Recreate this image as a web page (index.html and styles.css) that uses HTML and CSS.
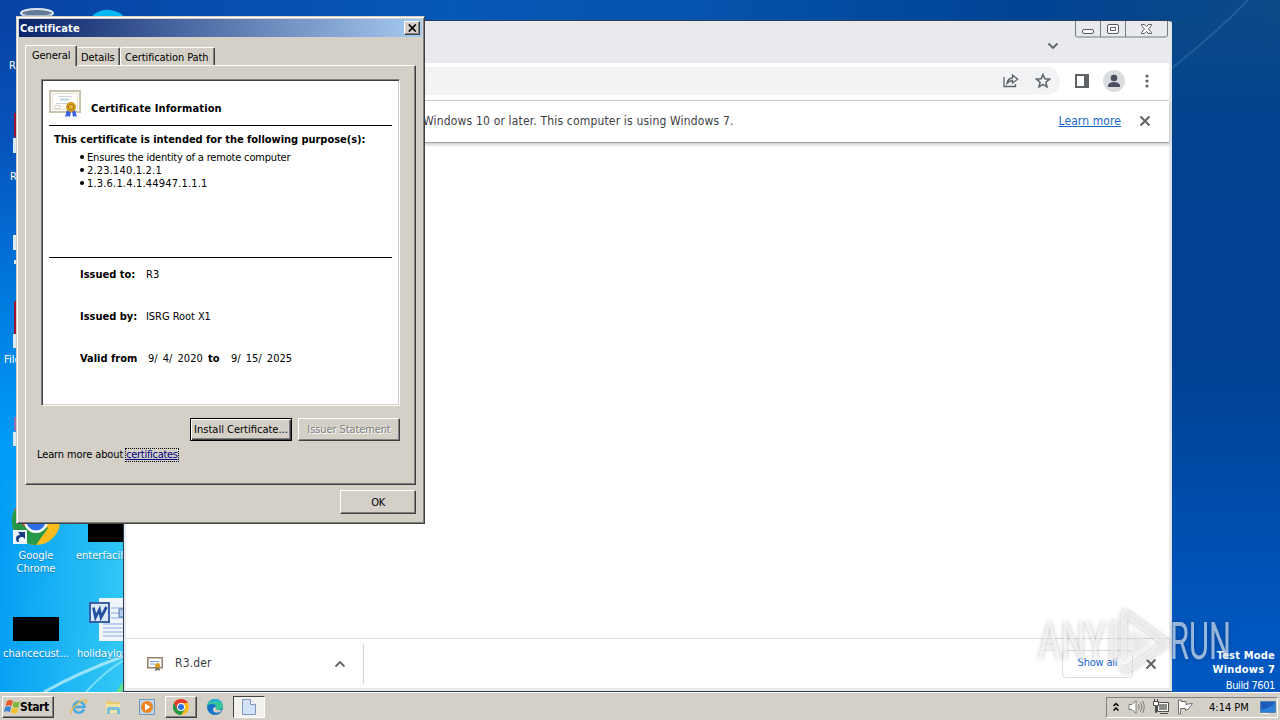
FILE: index.html
```html
<!DOCTYPE html>
<html lang="en">
<head>
    <meta charset="UTF-8">
    <meta name="viewport" content="width=device-width, initial-scale=1.0">
    <title>Certificate</title>
    <link rel="stylesheet" href="styles.css">
</head>
<body>
<div class="desktop">

    <!-- Wallpaper light rays -->
    <svg class="rays" width="1280" height="692" viewBox="0 0 1280 692">
        <path d="M44 692Q80 672 124 656" fill="none" stroke="#c8f5fd" stroke-width="3" opacity=".7"/>
        <path d="M86 692Q104 672 124 660" fill="none" stroke="#b5f3f5" stroke-width="2" opacity=".6"/>
        <path d="M116 692l8-12v12z" fill="#5ee08e"/>
        <path d="M1172 68Q1215 34 1248 0" fill="none" stroke="#4b86bd" stroke-width="2" opacity=".35"/>
    </svg>

    <!-- Desktop icons -->
    <svg class="desk-icon bin" width="36" height="14" viewBox="0 0 36 14"><ellipse cx="18" cy="5" rx="16" ry="4" fill="#637b98" stroke="#dce5ec" stroke-width="2"/><path d="M3 7l2 7h26l2-7" fill="#a9b9c9"/></svg>
    <svg class="desk-icon cloud" width="36" height="12" viewBox="0 0 36 12"><path d="M2 12V6Q10 0 19 1q10 1 15 8v3z" fill="#08b7ed"/></svg>
    <span class="desk-label l1">R</span>
    <span class="desk-label l2">R</span>
    <span class="desk-label l3">File</span>
    <svg class="desk-icon edge-strip" width="6" height="350" viewBox="0 0 6 350">
        <path d="M2 0h4v24H2zM2 188h4v33H2z" fill="#9d1230"/>
        <path d="M1 25h5v15H1zM1 122h5v15H1zM1 221h5v14H1zM1 319h5v14H1zM2 147h3v4H2z" fill="#dbe9f5"/>
        <path d="M2 304h4v14H2z" fill="#9470b0"/>
    </svg>
    <div class="desk-item chrome-item">
        <svg width="48" height="48" viewBox="0 0 48 48">
            <circle cx="24" cy="24" r="24" fill="#fbbc1b"/>
            <path d="M24 24L3 12A24 24 0 0 0 24 48l12-17z" fill="#279847"/>
            <path d="M24 0a24 24 0 0 1 21 12H24L12 30 3 12A24 24 0 0 1 24 0z" fill="#e33b2e"/>
            <circle cx="24" cy="24" r="12" fill="#fff"/><circle cx="24" cy="24" r="9.500" fill="#2e6fe4"/>
            <path d="M1 33h14v14H1z" fill="#eef3fa"/><path d="M5 45c-2-4-1-7 3-7L6 35h7v7l-2-2c-4 0-5 2-4 5z" fill="#173c86"/>
        </svg>
        <span>Google<br>Chrome</span>
    </div>
    <div class="desk-item enter-item"><i class="black-thumb"></i><span>enterfacilities...</span></div>
    <div class="desk-item chance-item"><i class="black-thumb"></i><span>chancecust...</span></div>
    <div class="desk-item holiday-item">
        <svg width="36" height="46" viewBox="0 0 36 46">
            <path d="M10 1h26v43H10z" fill="#f0f5fd"/>
            <path d="M22 11h14M22 16h14M22 21h14M14 27h22M14 31h22M14 35h22M14 39h22" stroke="#8aa9dc"/>
            <path d="M30 12h6v8h-6z" fill="#b5cbe9" stroke="#4e73ae"/>
            <path d="M1 6h19v19H1z" fill="#dce9fa" stroke="#3a60a8" stroke-width="2"/>
            <path d="M4.500 10.500l2 10 4-8 1.500 8L17.500 10" fill="none" stroke="#234f9f" stroke-width="2.700"/>
        </svg>
        <span>holidaylove...</span>
    </div>

    <div class="build"><b>Test Mode</b><b>Windows 7</b><span>Build 7601</span></div>

    <!-- Browser window -->
    <div class="browser">
        <div class="caption">
            <div class="win-buttons">
                <svg width="93" height="17" viewBox="0 0 93 17" fill="none" stroke="#777b80">
                    <path d="M.5 0v14q0 2 2 2h88q2 0 2-2V0M25.500 0v16M50.500 0v16"/>
                    <rect x="7.500" y="8.500" width="11" height="4" rx="1.500" fill="#fff" stroke="#55585c"/>
                    <rect x="32.500" y="3.500" width="11" height="9" rx="1.500" fill="#fff" stroke="#55585c"/>
                    <path d="M35.500 6.500h5v3h-5z" stroke="#55585c"/>
                    <path d="M66.500 3.500h3l2 2 2-2h3v1l-3 3.500 3 3.500v1h-3l-2-2-2 2h-3v-1l3-3.500-3-3.500z" fill="#fff" stroke="#55585c"/>
                </svg>
            </div>
            <svg class="chevron" width="12" height="8" viewBox="0 0 12 8"><path d="M1.500 1.500L6 6l4.500-4.500" fill="none" stroke="#5f6368" stroke-width="1.800"/></svg>
        </div>
        <div class="toolbar">
            <div class="omnibox">
                <svg width="16" height="16" viewBox="0 0 16 16" fill="none" stroke="#5f6368" stroke-width="1.300"><path d="M1 4v9.500h11.500V11M4 10.500Q4.500 5.500 9.500 5V2l5.200 4.200L9.500 10V7.500Q6.500 7.500 4 10.500z"/></svg>
                <svg width="16" height="16" viewBox="0 0 16 16" fill="none" stroke="#5f6368" stroke-width="1.500"><path d="M8 1.500l1.800 4.300 4.700.4-3.600 3 1.100 4.600L8 11.300l-4 2.500 1.100-4.600-3.600-3 4.700-.4z"/></svg>
            </div>
            <svg width="14" height="14" viewBox="0 0 14 14"><path d="M0 0h14v14H0zM2 2v10h7V2z" fill="#5f6368" fill-rule="evenodd"/></svg>
            <svg width="22" height="22" viewBox="0 0 22 22"><circle cx="11" cy="11" r="11" fill="#dadce0"/><circle cx="11" cy="8" r="3.300" fill="#4b5060"/><path d="M5 17v-1.500c0-2.500 4-3.500 6-3.500s6 1 6 3.500V17z" fill="#4b5060"/></svg>
            <svg width="4" height="14" viewBox="0 0 4 14" fill="#5f6368"><circle cx="2" cy="2" r="1.600"/><circle cx="2" cy="7" r="1.600"/><circle cx="2" cy="12" r="1.600"/></svg>
        </div>
        <div class="infobar">
            <span class="info-text">Windows 10 or later. This computer is using Windows 7.</span>
            <span class="learn">Learn more</span>
            <svg width="12" height="12" viewBox="0 0 12 12"><path d="M1.500 1.500l9 9M10.500 1.500l-9 9" stroke="#5f6368" stroke-width="2"/></svg>
        </div>
        <div class="page"></div>
        <div class="shelf">
            <div class="download">
                <svg width="16" height="14" viewBox="0 0 16 14"><path d="M.8.800h14.400v10H.8z" fill="#fff" stroke="#94836e" stroke-width="1.500"/><path d="M3 4.500h9M3 7h5" stroke="#7d9ada"/><path d="M9 9l-1 5 3-1 2 1-1-5" fill="#6f7067"/><circle cx="10.500" cy="8.500" r="2.500" fill="#d49c24"/></svg>
                <span>R3.der</span>
                <svg width="12" height="8" viewBox="0 0 12 8"><path d="M1.500 6.500L6 2l4.500 4.500" fill="none" stroke="#5f6368" stroke-width="1.800"/></svg>
            </div>
            <div class="show-all">Show all</div>
            <svg width="12" height="12" viewBox="0 0 12 12"><path d="M1.500 1.500l9 9M10.500 1.500l-9 9" stroke="#5f6368" stroke-width="2"/></svg>
        </div>
    </div>

    <!-- Certificate dialog -->
    <div class="dialog">
        <div class="titlebar">
            <span>Certificate</span>
            <div class="close"><svg width="9" height="8" viewBox="0 0 9 8"><path d="M.8.500l7 7M7.800.500l-7 7" stroke="#000" stroke-width="1.700"/></svg></div>
        </div>
        <div class="tabs">
            <div class="tab active"><span>General</span></div>
            <div class="tab tab-details"><span>Details</span></div>
            <div class="tab tab-path"><span>Certification Path</span></div>
        </div>
        <div class="panel">
            <div class="cert">
                <div class="cert-head">
                    <svg width="33" height="28" viewBox="0 0 33 28">
                        <path d="M1 1h30v21H1z" fill="#fffefb" stroke="#c9c0ae" stroke-width="2"/>
                        <path d="M3.500 3.500h25v16h-25z" fill="none" stroke="#e9e4d8"/>
                        <path d="M9 6.500h14M7 13.500h14" stroke="#ccd5dd"/><path d="M11 9.500h9" stroke="#b5d3ee" stroke-width="2"/>
                        <path d="M6 15.500h5v3H6z" fill="none" stroke="#d2d2cc"/>
                        <path d="M18 20l-2 7 3-1 2 1 1-6zM23 21l1 6 2-1 2 1-2-7z" fill="#3d62e0"/>
                        <circle cx="22" cy="17" r="5" fill="#d69a16"/><circle cx="22" cy="17" r="2.500" fill="#edbd3d" stroke="#a87108"/>
                    </svg>
                    <b>Certificate Information</b>
                </div>
                <div class="purpose">
                    <b>This certificate is intended for the following purpose(s):</b>
                    <ul>
                        <li><span class="p1">Ensures the identity of a remote computer</span></li>
                        <li><span class="oid">2.23.140.1.2.1</span></li>
                        <li><span class="oid">1.3.6.1.4.1.44947.1.1.1</span></li>
                    </ul>
                </div>
                <div class="issue">
                    <p><b>Issued to:</b><span>R3</span></p>
                    <p><b>Issued by:</b><span class="by">ISRG Root X1</span></p>
                    <p class="valid"><b>Valid from</b><span class="d1">9/ 4/ 2020</span><b class="and">to</b><span class="d2">9/ 15/ 2025</span></p>
                </div>
            </div>
            <div class="actions">
                <div class="btn default"><span>Install Certificate...</span></div>
                <div class="btn disabled"><span>Issuer Statement</span></div>
            </div>
            <div class="more">Learn more about <span>certificates</span></div>
        </div>
        <div class="footer"><div class="btn">OK</div></div>
    </div>

    <!-- Taskbar -->
    <div class="taskbar">
        <div class="start">
            <svg width="16" height="16" viewBox="0 0 16 16"><path d="M3 2q3-2 6 0L7.500 7Q5 5.500 1.500 7z" fill="#e8582b"/><path d="M10 2.500q3 1.500 6 0L14.500 8q-3 1.500-6-.5z" fill="#7fb73a"/><path d="M1.200 8q3-1.500 6 0L5.800 13Q3 11.500 0 13z" fill="#3b82cf"/><path d="M8.200 8.500q3 1.500 6 .5L13 14q-3 1.500-6-.5z" fill="#f5bf27"/></svg>
            <b>Start</b>
        </div>
        <div class="task">
            <svg width="18" height="16" viewBox="0 0 18 16"><path d="M14 10.500A5.500 5.500 0 1 1 14.500 8H5" fill="none" stroke="#45a9e4" stroke-width="2.500"/><path d="M2 14Q-1 14 4 8 11 0 16 1q2 1-1 4" fill="none" stroke="#e8bd42" stroke-width="1.300"/></svg>
        </div>
        <div class="task">
            <svg width="17" height="16" viewBox="0 0 17 16"><path d="M1 2h5l1 1h8v5H1z" fill="#e8cb6d"/><path d="M1 5h14v9H1z" fill="#f5e3a0"/><path d="M2 15v-5q0-2 2-2h9q2 0 2 2v5h-3v-4H5v4z" fill="#79bfdf"/></svg>
        </div>
        <div class="task">
            <svg width="16" height="16" viewBox="0 0 16 16"><path d="M.5.500h15v15H.5z" fill="#bcd8ee" stroke="#7396b7"/><circle cx="8" cy="8" r="6" fill="#ef851f"/><path d="M6 4.500L11.500 8 6 11.500z" fill="#fff"/></svg>
        </div>
        <div class="task raised">
            <svg width="16" height="16" viewBox="0 0 48 48"><circle cx="24" cy="24" r="24" fill="#fbbc1b"/><path d="M24 24L3 12A24 24 0 0 0 24 48l12-17z" fill="#279847"/><path d="M24 0a24 24 0 0 1 21 12H24L12 30 3 12A24 24 0 0 1 24 0z" fill="#e33b2e"/><circle cx="24" cy="24" r="12" fill="#fff"/><circle cx="24" cy="24" r="9" fill="#2e6fe4"/></svg>
        </div>
        <div class="task">
            <svg width="16" height="16" viewBox="0 0 16 16"><circle cx="8" cy="8" r="8" fill="#1675c6"/><path d="M0 8Q1 0 8 0q8 1 8 7 0 4-5 4-3 0-2-3-1-4-5-3-3 0-4 3z" fill="#3ac49b"/><path d="M1 5q2-5 7-5 5 0 7 4-4-3-8-1-4-1-6 2z" fill="#29b0d8"/><path d="M9 8q-1 4 6 3l-2 2q-6 2-7-2 0-3 3-3z" fill="#d4d0c8"/></svg>
        </div>
        <div class="task pressed">
            <svg width="14" height="16" viewBox="0 0 14 16"><path d="M.5.500h8l5 5v10H.5z" fill="#d2e2f8" stroke="#7f96bd"/><path d="M8.500.500v5h5" fill="#fff" stroke="#7f96bd"/></svg>
        </div>
        <div class="tray">
            <svg width="6" height="10" viewBox="0 0 6 10"><path d="M.5 4L3 1.500 5.500 4M.5 8.500L3 6l2.500 2.500" fill="none" stroke="#000" stroke-width="1.500"/></svg>
            <svg class="vol" width="17" height="16" viewBox="0 0 17 16" fill="none" stroke="#7a7a78"><path d="M1 5.500h3L8 1.500v13l-4-4H1z" fill="#fff"/><path d="M10.500 5.500q1.500 2.500 0 5M12.500 3.500q3 4.500 0 9M14.500 2q3.500 6 0 12"/></svg>
            <svg class="net" width="17" height="16" viewBox="0 0 17 16"><path d="M4.500 3.500h11v9h-11z" fill="#8b8b88" stroke="#4d4d4b"/><path d="M5.500 4.500h9v7h-9z" fill="none" stroke="#fff"/><path d="M7 14.500h8" stroke="#4d4d4b"/><path d="M.5 2.500h5v4h-2v7h-1v-7h-2z" fill="#fff" stroke="#4d4d4b"/><path d="M1.500 0v3M4.500 0v3" stroke="#4d4d4b"/></svg>
            <svg class="flag" width="17" height="16" viewBox="0 0 17 16"><path d="M1.500 1v14h2V9.500h5v2q3-1 4-3l3-4q-3 0-6.500 1V2.500h-5V1z" fill="#fff" stroke="#6f6f6d"/></svg>
            <span>4:14 PM</span>
            <svg width="16" height="13" viewBox="0 0 16 13"><path d="M.5.500h15v11H.5z" fill="#1c5cb8" stroke="#5a80ad"/><path d="M1 9Q9 8 15 2v9H1z" fill="#2f80d8"/><path d="M1 12.500h8" stroke="#f3f6f9"/></svg>
        </div>
    </div>

    <!-- Watermark over everything -->
    <svg class="watermark" width="210" height="74" viewBox="0 0 210 74">
        <g fill="#fff" fill-opacity=".6">
            <text x="6" y="54" textLength="68" lengthAdjust="spacingAndGlyphs">ANY</text>
            <text x="138" y="54" textLength="61" lengthAdjust="spacingAndGlyphs">RUN</text>
            <path d="M78 18l7-3v42l-7-3zM89 7l5-3 43 31v6L94 69l-7-5V59l7 3 34-24-33-24v42l-6-3z"/>
            <path d="M99 25v27l21-14z" fill-opacity=".35"/>
        </g>
    </svg>
</div>
</body>
</html>
```
FILE: styles.css
```css
* {
    box-sizing: border-box;
}
body {
    margin: 0;
    font-family: "DejaVu Sans Condensed", "DejaVu Sans", sans-serif;
    font-stretch: condensed;
    font-size: 11px;
    line-height: 13px;
    color: #000;
    overflow: hidden;
}
svg {
    display: block;
    flex-shrink: 0;
}
p, ul {
    margin: 0;
    padding: 0;
}
.desktop {
    position: relative;
    width: 1280px;
    height: 720px;
    overflow: hidden;
    white-space: nowrap;
    background:
        linear-gradient(90deg, transparent 0, rgba(90, 235, 245, 0.6) 140px) 0 100% / 140px 240px no-repeat,
        linear-gradient(#0743a5 0, #0754bd 18%, #0077dc 38%, #009bf5 60%, #08a2f4 100%) 0 20px / 160px 700px no-repeat,
        linear-gradient(90deg, #0743a5 0, #0658b5 35%, #0553ad 55%, #004394 80%, #0b4a86 100%) 0 0 / 100% 20px no-repeat,
        linear-gradient(#0b4a86 0, #004190 20%, #004192 50%, #0055bd 85%, #0059c2 100%);
}
.rays {
    position: absolute;
    top: 0;
    left: 0;
}

/* Desktop icons */
.desk-icon, .desk-label, .desk-item {
    position: absolute;
    color: #fff;
}
.bin { left: 19px; top: 8px; }
.cloud { left: 91px; top: 9px; }
.edge-strip { left: 12px; top: 113px; }
.l1 { left: 9px; top: 59px; }
.l2 { left: 10px; top: 170px; }
.l3 { left: 4px; top: 353px; }
.desk-item {
    display: flex;
    flex-direction: column;
    align-items: center;
    text-align: center;
    width: 74px;
    text-shadow: 0 1px 1px rgba(0, 40, 90, 0.4);
}
.chrome-item {
    left: -1px;
    top: 497px;
    gap: 4px;
}
.enter-item {
    left: 76px;
    top: 518px;
    gap: 7px;
    align-items: flex-start;
}
.enter-item .black-thumb {
    margin-left: 12px;
}
.chance-item {
    left: -1px;
    top: 617px;
    gap: 6px;
}
.holiday-item {
    left: 77px;
    top: 597px;
    gap: 4px;
    align-items: flex-start;
}
.holiday-item svg {
    margin-left: 12px;
}
.black-thumb {
    width: 46px;
    height: 24px;
    background: #000;
}
.build {
    position: absolute;
    right: 5px;
    top: 649px;
    display: flex;
    flex-direction: column;
    align-items: flex-end;
    gap: 1px;
    color: #fff;
}
.build b {
    letter-spacing: 0.2px;
}
.build span {
    margin-top: 2px;
    letter-spacing: -0.4px;
}

/* Browser window */
.browser {
    position: absolute;
    left: 123px;
    top: 20px;
    width: 1049px;
    height: 672px;
    display: flex;
    flex-direction: column;
    background: #e8eaed;
    border: 1px solid #2c3e55;
    border-right-color: #d9e2ea;
    border-radius: 0 4px 0 0;
    padding: 0 2px 3px 2px;
    font-size: 12px;
    color: #3c4043;
}
.caption {
    display: flex;
    flex-direction: column;
    align-items: flex-end;
    height: 42px;
}
.win-buttons {
    margin-right: 1px;
}
.chevron {
    margin: 4px 110px 0 0;
}
.toolbar {
    display: flex;
    align-items: center;
    height: 38px;
    background: #fff;
    border-bottom: 1px solid #d5d6d8;
    padding: 0 20px 1px 0;
}
.toolbar > svg:nth-of-type(2) {
    margin: 0 20px 0 14px;
}
.omnibox {
    display: flex;
    justify-content: flex-end;
    align-items: center;
    gap: 16px;
    width: 780px;
    height: 28px;
    margin: 0 15px 0 auto;
    padding-right: 9px;
    border-radius: 14px;
    background: #f1f3f4;
}
.infobar {
    display: flex;
    align-items: center;
    height: 42px;
    background: #fff;
    border-bottom: 1px solid #a4a4a4;
    box-shadow: 0 1px 3px rgba(0, 0, 0, 0.3);
    padding: 0 18px 1px 297px;
}
.info-text {
    letter-spacing: 0.17px;
}
.learn {
    margin: 0 18px 0 auto;
    letter-spacing: 0.1px;
    color: #1967c5;
    text-decoration: underline;
}
.page {
    flex: 1;
    background: linear-gradient(#cfcfcf, #fff 4px);
}
.shelf {
    display: flex;
    align-items: center;
    height: 50px;
    background: #fff;
    border-top: 1px solid #dcdde0;
    padding-right: 12px;
}
.download {
    display: flex;
    align-items: center;
    width: 238px;
    height: 40px;
    padding: 0 17px 0 21px;
    border-right: 1px solid #d0d2d5;
}
.download span {
    margin: 0 auto 0 12px;
    letter-spacing: 0.15px;
}
.show-all {
    width: 71px;
    height: 28px;
    line-height: 24px;
    margin: 0 12px 0 auto;
    border: 1px solid #dadce0;
    border-radius: 4px;
    text-align: center;
    font-size: 11px;
    letter-spacing: -0.2px;
    color: #1967d2;
}

/* Certificate dialog */
.dialog {
    position: absolute;
    left: 16px;
    top: 16px;
    width: 409px;
    height: 508px;
    padding: 2px;
    background: #d4d0c8;
    border: 1px solid;
    border-color: #d4d0c8 #404040 #404040 #d4d0c8;
    box-shadow: inset 1px 1px #fff, inset -1px -1px #808080;
}
.titlebar {
    display: flex;
    align-items: center;
    justify-content: space-between;
    height: 18px;
    padding: 0 2px 0 1px;
    background: linear-gradient(90deg, #0a246a, #a6caf0);
    color: #fff;
    font-weight: bold;
    letter-spacing: 0.1px;
}
.close {
    display: flex;
    align-items: center;
    justify-content: center;
    width: 16px;
    height: 14px;
    background: #d4d0c8;
    border: 1px solid;
    border-color: #fff #404040 #404040 #fff;
    box-shadow: inset -1px -1px #808080;
}
.tabs {
    display: flex;
    align-items: flex-end;
    height: 28px;
    padding-left: 6px;
}
.tab {
    height: 18px;
    padding: 3px 0 0 4px;
    border: 1px solid #fff;
    border-right-color: #404040;
    border-bottom: 0;
    border-radius: 2px 2px 0 0;
    box-shadow: inset -1px 0 #808080;
    letter-spacing: -0.1px;
}
.tab.active {
    width: 52px;
    height: 21px;
    padding: 3px 0 0 6px;
    margin-bottom: -1px;
    background: #d4d0c8;
    z-index: 1;
}
.tab-details {
    width: 43px;
    border-left: 0;
}
.tab-path {
    width: 95px;
}
.panel {
    display: flex;
    flex-direction: column;
    width: 391px;
    height: 420px;
    margin-left: 6px;
    padding: 13px 15px 0 15px;
    border: 1px solid;
    border-color: #fff #404040 #404040 #fff;
    box-shadow: inset -1px -1px #808080;
}
.cert {
    width: 359px;
    height: 327px;
    background: #fff;
    border: 1px solid;
    border-color: #808080 #fff #fff #808080;
    box-shadow: inset 1px 1px #404040, inset -1px -1px #d4d0c8;
    padding: 10px 7px 0 7px;
}
.cert-head {
    display: flex;
    height: 36px;
    border-bottom: 1px solid #000;
}
.cert-head b {
    margin: 12px 0 0 9px;
    letter-spacing: 0.13px;
}
.purpose {
    height: 132px;
    padding: 7px 0 0 5px;
    border-bottom: 1px solid #000;
}
.purpose > b {
    letter-spacing: -0.04px;
}
.purpose ul {
    list-style: none;
    margin-top: 5px;
    padding-left: 26px;
}
.purpose li {
    display: flex;
    align-items: center;
    height: 13px;
    gap: 3px;
}
.purpose li::before {
    content: "";
    width: 4px;
    height: 4px;
    margin-bottom: 1px;
    border-radius: 2px;
    background: #000;
}
.p1 {
    letter-spacing: -0.18px;
}
.oid {
    letter-spacing: 0.18px;
}
.issue {
    display: flex;
    flex-direction: column;
    gap: 29px;
    padding: 10px 0 0 31px;
}
.issue p {
    display: flex;
}
.issue p > b:first-child {
    width: 66px;
}
.issue .valid > b:first-child {
    width: 68px;
}
.by {
    letter-spacing: -0.05px;
}
.and {
    width: 23px;
}
.d1 {
    width: 60px;
    word-spacing: 2px;
}
.d2 {
    word-spacing: 2px;
}
.actions {
    display: flex;
    justify-content: flex-end;
    gap: 6px;
    margin-top: 12px;
}
.btn {
    display: flex;
    align-items: center;
    justify-content: center;
    width: 102px;
    height: 23px;
    border: 1px solid;
    border-color: #fff #404040 #404040 #fff;
    box-shadow: inset -1px -1px #808080;
}
.btn.default {
    border-color: #000;
    box-shadow: inset 1px 1px #fff, inset -1px -1px #404040, inset -2px -2px #808080;
}
.btn.disabled {
    color: #808080;
    text-shadow: 1px 1px #fff;
    letter-spacing: -0.1px;
}
.more {
    margin: 7px 0 0 -4px;
    letter-spacing: -0.12px;
}
.more span {
    display: inline-block;
    outline: 1px dotted #000;
    color: #000080;
    text-decoration: underline;
    line-height: 12px;
    letter-spacing: -0.3px;
}
.footer {
    display: flex;
    justify-content: flex-end;
    padding: 5px 6px 0 0;
}
.footer .btn {
    width: 76px;
    height: 24px;
    letter-spacing: -0.5px;
}

/* Taskbar */
.taskbar {
    position: absolute;
    left: 0;
    bottom: 0;
    width: 1280px;
    height: 28px;
    display: flex;
    align-items: center;
    background: #d4d0c8;
    border-top: 1px solid #fff;
    padding: 2px 2px 1px 2px;
}
.start {
    display: flex;
    align-items: center;
    width: 52px;
    height: 22px;
    padding-left: 1px;
    margin-right: 9px;
    border: 1px solid;
    border-color: #fff #404040 #404040 #fff;
    box-shadow: inset -1px -1px #808080;
}
.start b {
    font-size: 12px;
    letter-spacing: -0.4px;
}
.task {
    display: flex;
    align-items: center;
    justify-content: center;
    width: 32px;
    height: 22px;
    margin-right: 2px;
    border: 1px solid transparent;
}
.raised {
    border-color: #fff #404040 #404040 #fff;
    box-shadow: inset -1px -1px #808080;
}
.pressed {
    background: #f3f1ee;
    border-color: #404040 #fff #fff #404040;
}
.tray {
    display: flex;
    align-items: center;
    width: 172px;
    height: 21px;
    margin-left: auto;
    padding-left: 6px;
    border: 1px solid;
    border-color: #808080 #fff #fff #808080;
}
.vol {
    margin: 0 8px 0 9px;
}
.net {
    margin-right: 7px;
}
.tray span {
    width: 40px;
    margin: 0 11px 0 15px;
}

.watermark {
    position: absolute;
    left: 1032px;
    top: 605px;
    font-family: Roboto, sans-serif;
    font-size: 51px;
    font-weight: normal;
    font-stretch: normal;
    filter: drop-shadow(0 0 2px rgba(0, 0, 0, 0.4));
}
```
